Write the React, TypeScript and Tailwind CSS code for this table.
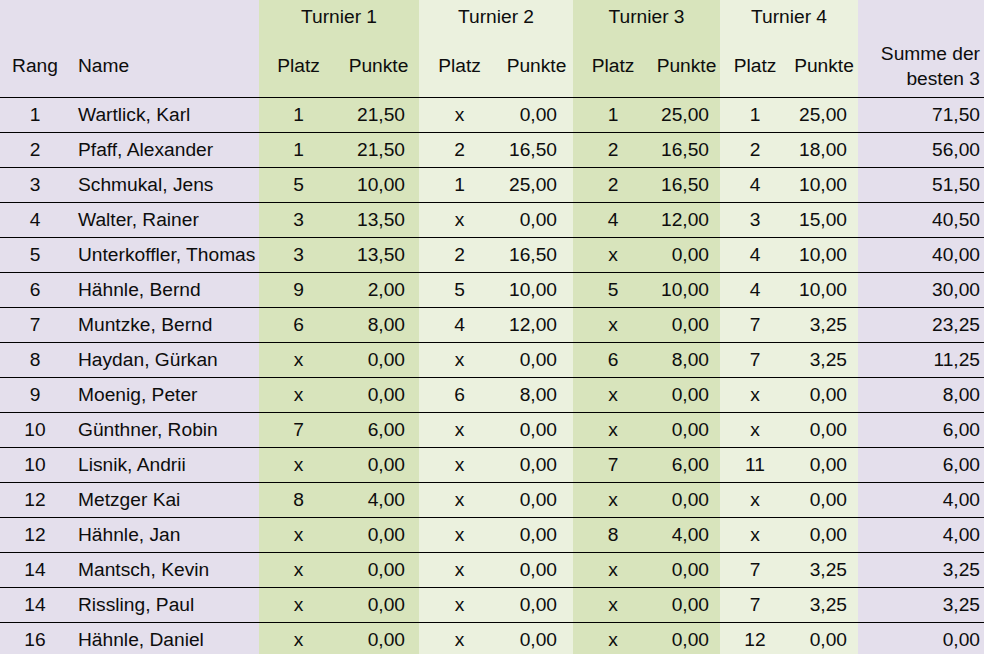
const LAV = 'bg-[#e4dfec]';
const DARK = 'bg-[#d8e4bc]';
const LIGHT = 'bg-[#ebf1de]';

type Result = [string, string];

type Row = {
  rang: number;
  name: string;
  results: [Result, Result, Result, Result];
  sum: string;
};

const rows: Row[] = [
  { rang: 1, name: 'Wartlick, Karl', results: [['1', '21,50'], ['x', '0,00'], ['1', '25,00'], ['1', '25,00']], sum: '71,50' },
  { rang: 2, name: 'Pfaff, Alexander', results: [['1', '21,50'], ['2', '16,50'], ['2', '16,50'], ['2', '18,00']], sum: '56,00' },
  { rang: 3, name: 'Schmukal, Jens', results: [['5', '10,00'], ['1', '25,00'], ['2', '16,50'], ['4', '10,00']], sum: '51,50' },
  { rang: 4, name: 'Walter, Rainer', results: [['3', '13,50'], ['x', '0,00'], ['4', '12,00'], ['3', '15,00']], sum: '40,50' },
  { rang: 5, name: 'Unterkoffler, Thomas', results: [['3', '13,50'], ['2', '16,50'], ['x', '0,00'], ['4', '10,00']], sum: '40,00' },
  { rang: 6, name: 'Hähnle, Bernd', results: [['9', '2,00'], ['5', '10,00'], ['5', '10,00'], ['4', '10,00']], sum: '30,00' },
  { rang: 7, name: 'Muntzke, Bernd', results: [['6', '8,00'], ['4', '12,00'], ['x', '0,00'], ['7', '3,25']], sum: '23,25' },
  { rang: 8, name: 'Haydan, Gürkan', results: [['x', '0,00'], ['x', '0,00'], ['6', '8,00'], ['7', '3,25']], sum: '11,25' },
  { rang: 9, name: 'Moenig, Peter', results: [['x', '0,00'], ['6', '8,00'], ['x', '0,00'], ['x', '0,00']], sum: '8,00' },
  { rang: 10, name: 'Günthner, Robin', results: [['7', '6,00'], ['x', '0,00'], ['x', '0,00'], ['x', '0,00']], sum: '6,00' },
  { rang: 10, name: 'Lisnik, Andrii', results: [['x', '0,00'], ['x', '0,00'], ['7', '6,00'], ['11', '0,00']], sum: '6,00' },
  { rang: 12, name: 'Metzger Kai', results: [['8', '4,00'], ['x', '0,00'], ['x', '0,00'], ['x', '0,00']], sum: '4,00' },
  { rang: 12, name: 'Hähnle, Jan', results: [['x', '0,00'], ['x', '0,00'], ['8', '4,00'], ['x', '0,00']], sum: '4,00' },
  { rang: 14, name: 'Mantsch, Kevin', results: [['x', '0,00'], ['x', '0,00'], ['x', '0,00'], ['7', '3,25']], sum: '3,25' },
  { rang: 14, name: 'Rissling, Paul', results: [['x', '0,00'], ['x', '0,00'], ['x', '0,00'], ['7', '3,25']], sum: '3,25' },
  { rang: 16, name: 'Hähnle, Daniel', results: [['x', '0,00'], ['x', '0,00'], ['x', '0,00'], ['12', '0,00']], sum: '0,00' },
];

// per tournament: background, Platz width, Punkte width, Punkte right padding
const turniere = [
  { title: 'Turnier 1', bg: DARK, platz: 'w-[79px]', punkte: 'w-[81px]', pad: 'pr-[14px]' },
  { title: 'Turnier 2', bg: LIGHT, platz: 'w-[81px]', punkte: 'w-[73px]', pad: 'pr-[16px]' },
  { title: 'Turnier 3', bg: DARK, platz: 'w-[80px]', punkte: 'w-[67px]', pad: 'pr-[11px]' },
  { title: 'Turnier 4', bg: LIGHT, platz: 'w-[70px]', punkte: 'w-[68px]', pad: 'pr-[11px]' },
];

export default function App() {
  return (
    <div
      className={`h-[654px] w-[984px] overflow-hidden ${LAV} text-[19.2px] text-[#0d0d0d]`}
      style={{ fontFamily: '"Liberation Sans", Arial, sans-serif' }}
    >
      {/* header */}
      <div className="flex h-[98px] border-b border-black">
        <div className="flex w-[70px] flex-col">
          <div className="h-[35px]" />
          <div className="flex flex-1 items-center justify-center">Rang</div>
        </div>
        <div className="flex w-[189px] flex-col">
          <div className="h-[35px]" />
          <div className="flex flex-1 items-center pl-2">Name</div>
        </div>
        {turniere.map((t) => (
          <div key={t.title} className={`flex flex-col ${t.bg}`}>
            <div className="flex h-[35px] items-center justify-center">{t.title}</div>
            <div className="flex flex-1">
              <div className={`flex items-center justify-center ${t.platz}`}>Platz</div>
              <div className={`flex items-center justify-center ${t.punkte}`}>Punkte</div>
            </div>
          </div>
        ))}
        <div className="flex w-[126px] flex-col">
          <div className="h-[35px]" />
          <div className="flex flex-1 items-center justify-end pr-1 text-right leading-[25px]">
            Summe der
            <br />
            besten 3
          </div>
        </div>
      </div>

      {/* rows */}
      {rows.map((r, i) => (
        <div key={i} className="flex h-[35px] border-b border-black">
          <div className="flex w-[70px] items-center justify-center pt-px">{r.rang}</div>
          <div className="flex w-[189px] items-center whitespace-nowrap pl-2 pt-px">{r.name}</div>
          {turniere.map((t, j) => (
            <div key={t.title} className={`flex ${t.bg}`}>
              <div className={`flex items-center justify-center pt-px ${t.platz}`}>{r.results[j][0]}</div>
              <div className={`flex items-center justify-end pt-px ${t.punkte} ${t.pad}`}>{r.results[j][1]}</div>
            </div>
          ))}
          <div className="flex w-[126px] items-center justify-end pr-1 pt-px">{r.sum}</div>
        </div>
      ))}
    </div>
  );
}
